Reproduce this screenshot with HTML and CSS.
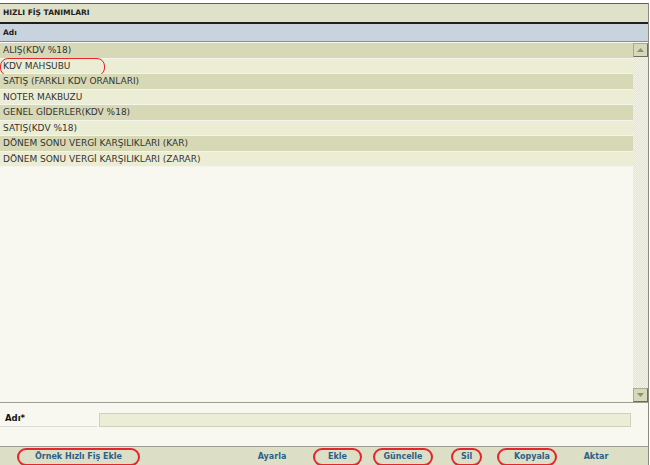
FILE: index.html
```html
<!DOCTYPE html>
<html lang="tr">
<head>
<meta charset="utf-8">
<title>Hızlı Fiş Tanımları</title>
<link rel="stylesheet" href="styles.css">
</head>
<body>
<div class="panel">
  <div class="title">HIZLI FİŞ TANIMLARI</div>
  <div class="colhead">Adı</div>
  <div class="listwrap">
    <div class="rows">
      <div class="row dark">ALIŞ(KDV %18)</div>
      <div class="row light marked-row">KDV MAHSUBU<span class="mark-oval"></span></div>
      <div class="row dark">SATIŞ (FARKLI KDV ORANLARI)</div>
      <div class="row light">NOTER MAKBUZU</div>
      <div class="row dark">GENEL GİDERLER(KDV %18)</div>
      <div class="row light">SATIŞ(KDV %18)</div>
      <div class="row dark">DÖNEM SONU VERGİ KARŞILIKLARI (KAR)</div>
      <div class="row light">DÖNEM SONU VERGİ KARŞILIKLARI (ZARAR)</div>
    </div>
    <div class="scrollbar">
      <div class="sbtn"><svg width="7" height="4" viewBox="0 0 7 4"><path d="M0 4 L3.5 0 L7 4 Z" fill="#8d8f74"/></svg></div>
      <div class="track"></div>
      <div class="sbtn"><svg width="7" height="4" viewBox="0 0 7 4"><path d="M0 0 L3.5 4 L7 0 Z" fill="#8d8f74"/></svg></div>
    </div>
  </div>
  <div class="form">
    <div class="label">Adı*</div>
    <div class="input"></div>
  </div>
  <div class="bar">
    <span class="btn b-ornek marked">Örnek Hızlı Fiş Ekle</span>
    <span class="btn b-ayarla">Ayarla</span>
    <span class="btn b-ekle marked">Ekle</span>
    <span class="btn b-guncelle marked">Güncelle</span>
    <span class="btn b-sil marked">Sil</span>
    <span class="btn b-kopyala marked">Kopyala</span>
    <span class="btn b-aktar">Aktar</span>
  </div>
</div>
</body>
</html>
```

FILE: styles.css
```css
* { box-sizing: border-box; }
html, body { margin: 0; padding: 0; background: #ffffff; }
body {
  font-family: "DejaVu Sans", Verdana, sans-serif;
  font-size: 9px;
  color: #333333;
  width: 650px;
  height: 465px;
  overflow: hidden;
}
.panel {
  margin-top: 3px;
  width: 649px;
  border-top: 1px solid #5f5f5a;
  border-right: 1px solid #8a8a80;
  background: #f8f8f1;
}
.title {
  height: 20px;
  line-height: 18px;
  padding-left: 3px;
  background: #dfe1c8;
  font-weight: bold;
  font-size: 7.5px;
  color: #222;
  border-bottom: 2px solid #1e1e1e;
}
.colhead {
  height: 18px;
  line-height: 17px;
  padding-left: 3px;
  background: #c8d3dd;
  font-weight: bold;
  font-size: 7.5px;
  color: #222;
  border-bottom: 1px solid #8c8c88;
}
.listwrap {
  display: flex;
  height: 361px;
  padding-top: 1px;
  background: #f8f8f1;
  border-bottom: 1px solid #9c9c94;
}
.rows { flex: 1; }
.row {
  position: relative;
  height: 15.5px;
  line-height: 15px;
  padding-left: 3px;
  border-bottom: 1px solid #f4f4ea;
  white-space: nowrap;
}
.dark { background: #d7d9b6; }
.light { background: #ecedd5; }
.mark-oval {
  position: absolute;
  left: 0;
  top: -1px;
  width: 105px;
  height: 18px;
  border: 1.5px solid #e3262b;
  border-radius: 8px;
}
.scrollbar {
  width: 15px;
  display: flex;
  flex-direction: column;
  background: #ececdc;
  background-image: repeating-conic-gradient(#e4e4d2 0 25%, #f2f2e6 0 50%);
  background-size: 2px 2px;
}
.sbtn {
  height: 14px;
  background: #d6d8ba;
  border: 1px solid #a9ab90;
  border-right-color: #6d6f5a;
  border-bottom-color: #6d6f5a;
  display: flex;
  align-items: center;
  justify-content: center;
}
.track { flex: 1; }
.form {
  display: flex;
  align-items: flex-start;
  height: 44px;
  padding-top: 9px;
  background: #f8f8f1;
  border-bottom: 1px solid #9c9c94;
}
.label {
  width: 97px;
  height: 15px;
  padding-left: 5px;
  font-weight: bold;
  font-size: 8.5px;
  line-height: 13px;
  color: #111;
  border-bottom: 1px solid #dcdcd4;
}
.input {
  margin-left: 2px;
  margin-top: 1px;
  width: 532px;
  height: 14px;
  background: #ecedd7;
  border: 1px solid #cfd1b8;
}
.bar {
  display: flex;
  align-items: center;
  height: 19px;
  background: #dcdfc6;
}
.btn {
  height: 18px;
  line-height: 14px;
  text-align: center;
  font-weight: bold;
  font-size: 8px;
  color: #2e5f88;
  border: 2px solid transparent;
  border-radius: 10px;
  white-space: nowrap;
}
.btn.marked { border-color: #e3262b; }
.b-ornek { margin-left: 17px; width: 123px; }
.b-ayarla { margin-left: 112px; width: 40px; }
.b-ekle { margin-left: 21px; width: 49px; }
.b-guncelle { margin-left: 11px; width: 60px; }
.b-sil { margin-left: 18px; width: 31px; }
.b-kopyala { margin-left: 15px; width: 60px; padding-left: 10px; }
.b-aktar { margin-left: 19px; width: 40px; }
```
